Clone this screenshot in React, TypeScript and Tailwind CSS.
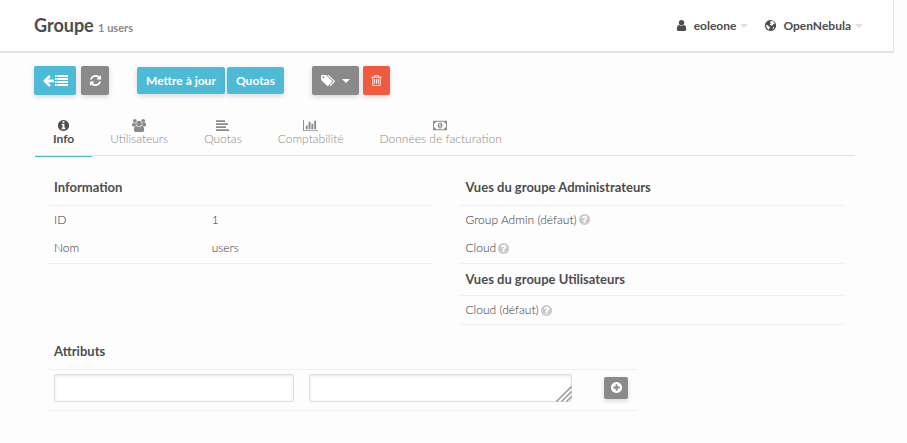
import { useState } from 'react';
import type { ReactNode } from 'react';
import clsx from 'clsx';

const DISC =
  'm0 0M1664 896q0 209-103 385.5t-279.5 279.5-385.5 103-385.5-103-279.5-279.5-103-385.5 103-385.5 279.5-279.5 385.5-103 385.5 103 279.5 279.5 103 385.5z';

const icons = {
  user: 'M1536 1399q0 109-62.5 187t-150.5 78h-854q-88 0-150.5-78t-62.5-187q0-85 8.5-160.5t31.5-152 58.5-131 94-89 134.5-34.5q131 128 313 128t313-128q76 0 134.5 34.5t94 89 58.5 131 31.5 152 8.5 160.5zm-256-887q0 159-112.5 271.5t-271.5 112.5-271.5-112.5-112.5-271.5 112.5-271.5 271.5-112.5 271.5 112.5 112.5 271.5z',
  globe:
    'M896 128q209 0 385.5 103t279.5 279.5 103 385.5-103 385.5-279.5 279.5-385.5 103-385.5-103-279.5-279.5-103-385.5 103-385.5 279.5-279.5 385.5-103zM900 300l160-60 230 110 150 190 50 200-110-60-130 40-60 170-150 30-110-110-130-20 60-140 110-60-110-90zM330 760l170 90 130 160 150 50 60 140-110 110-20 180-190-110-140-200-70-220zM1290 1130l140-60-70 190-130 130-60-100z',
  arrow:
    'M1664 896v128q0 53-32.5 90.5t-84.5 37.5h-704l293 294q38 36 38 90t-38 90l-75 76q-37 37-90 37-52 0-91-37l-651-652q-37-37-37-90 0-52 37-91l651-650q38-38 91-38 52 0 90 38l75 74q38 38 38 91t-38 91l-293 293h704q52 0 84.5 37.5t32.5 90.5z',
  list: 'M0 138h220v276h-220zM320 138h1472v276h-1472zM0 551h220v276h-220zM320 551h1472v276h-1472zM0 965h220v276h-220zM320 965h1472v276h-1472zM0 1378h220v276h-220zM320 1378h1472v276h-1472z',
  refresh:
    'M1639 1056q0 5-1 7-64 268-268 434.5t-478 166.5q-146 0-282.5-55t-243.5-157l-129 129q-19 19-45 19t-45-19-19-45v-448q0-26 19-45t45-19h448q26 0 45 19t19 45-19 45l-137 137q71 66 161 102t187 36q134 0 250-65t186-179q11-17 53-117 8-23 30-23h192q13 0 22.5 9.5t9.5 22.5zm25-800v448q0 26-19 45t-45 19h-448q-26 0-45-19t-19-45 19-45l138-138q-148-137-349-137-134 0-250 65t-186 179q-11 17-53 117-8 23-30 23h-199q-13 0-22.5-9.5t-9.5-22.5v-7q65-268 270-434.5t480-166.5q146 0 284 55.5t245 156.5l130-129q19-19 45-19t45 19 19 45z',
  tags: 'M448 448q0-53-37.5-90.5t-90.5-37.5-90.5 37.5-37.5 90.5 37.5 90.5 90.5 37.5 90.5-37.5 37.5-90.5zm1067 576q0 53-37 90l-491 492q-39 37-91 37-53 0-90-37l-715-716q-38-37-64.5-101t-26.5-117v-416q0-52 38-90t90-38h416q53 0 117 26.5t102 64.5l715 714q37 39 37 91zm384 0q0 53-37 90l-491 492q-39 37-91 37-36 0-59-14t-53-45l470-470q37-37 37-90 0-52-37-91l-715-714q-38-38-102-64.5t-117-26.5h224q53 0 117 26.5t102 64.5l715 714q37 39 37 91z',
  trash:
    'M704 736v576q0 14-9 23t-23 9h-64q-14 0-23-9t-9-23v-576q0-14 9-23t23-9h64q14 0 23 9t9 23zm256 0v576q0 14-9 23t-23 9h-64q-14 0-23-9t-9-23v-576q0-14 9-23t23-9h64q14 0 23 9t9 23zm256 0v576q0 14-9 23t-23 9h-64q-14 0-23-9t-9-23v-576q0-14 9-23t23-9h64q14 0 23 9t9 23zm128 724v-948h-896v948q0 22 7 40.5t14.5 27 10.5 8.5h832q3 0 10.5-8.5t14.5-27 7-40.5zm-672-1076h448l-48-117q-7-9-17-11h-317q-10 2-17 11zm928 32v64q0 14-9 23t-23 9h-96v948q0 83-47 143.5t-113 60.5h-832q-66 0-113-58.5t-47-141.5v-952h-96q-14 0-23-9t-9-23v-64q0-14 9-23t23-9h309l70-167q15-37 54-63t79-26h320q40 0 79 26t54 63l70 167h309q14 0 23 9t9 23z',
  info:
    'M1152 1376v-160q0-14-9-23t-23-9h-96v-512q0-14-9-23t-23-9h-320q-14 0-23 9t-9 23v160q0 14 9 23t23 9h96v320h-96q-14 0-23 9t-9 23v160q0 14 9 23t23 9h448q14 0 23-9t9-23zm-128-896v-160q0-14-9-23t-23-9h-192q-14 0-23 9t-9 23v160q0 14 9 23t23 9h192q14 0 23-9t9-23z' +
    DISC,
  question:
    'M1024 1376v-192q0-14-9-23t-23-9h-192q-14 0-23 9t-9 23v192q0 14 9 23t23 9h192q14 0 23-9t9-23zm256-672q0-88-55.5-163t-138.5-116-170-41q-243 0-371 213-15 24 8 42l132 100q7 6 19 6 16 0 25-12 53-68 86-92 34-24 86-24 48 0 85.5 26t37.5 59q0 38-20 61t-68 45q-63 28-115.5 86.5t-52.5 125.5v36q0 14 9 23t23 9h192q14 0 23-9t9-23q0-19 21.5-49.5t54.5-49.5q32-18 49-28.5t46-35 44.5-48 28-60.5 12.5-81z' +
    DISC,
  plus:
    'M1344 960v-128q0-26-19-45t-45-19h-256v-256q0-26-19-45t-45-19h-128q-26 0-45 19t-19 45v256h-256q-26 0-45 19t-19 45v128q0 26 19 45t45 19h256v256q0 26 19 45t45 19h128q26 0 45-19t19-45v-256h256q26 0 45-19t19-45z' +
    DISC,
  users:
    'M593 896q-162 5-265 128h-134q-82 0-138-40.5t-56-118.5q0-353 124-353 6 0 43.5 21t97.5 42.5 119 21.5q67 0 133-23-5 37-5 66 0 159 93 292zm1071 637q0 120-73 189.5t-194 69.5h-874q-121 0-194-69.5t-73-189.5q0-53 3.5-103.5t14-109 26.5-108.5 43-97.5 62-81 85.5-53.5 111.5-20q10 0 43 21.5t73 48 107 48 135 21.5 135-21.5 107-48 73-48 43-21.5q61 0 111.5 20t85.5 53.5 62 81 43 97.5 26.5 108.5 14 109 3.5 103.5zm-1024-1277q0 106-75 181t-181 75-181-75-75-181 75-181 181-75 181 75 75 181zm704 384q0 159-112.5 271.5t-271.5 112.5-271.5-112.5-112.5-271.5 112.5-271.5 271.5-112.5 271.5 112.5 112.5 271.5zm576 225q0 78-56 118.5t-138 40.5h-134q-103-123-265-128 93-133 93-292 0-29-5-66 66 23 133 23 59 0 119-21.5t97.5-42.5 43.5-21q124 0 124 353zm-128-609q0 106-75 181t-181 75-181-75-75-181 75-181 181-75 181 75 75 181z',
  align: 'M0 165h1240v240h-1240zM0 579h1654v240h-1654zM0 992h1378v240h-1378zM0 1406h1792v240h-1792z',
  chart:
    'M640 896v512h-256v-512h256zm384-512v1024h-256v-1024h256zm1024 1152v128h-2048v-1536h128v1408h1920zm-640-896v768h-256v-768h256zm384-384v1152h-256v-1152h256z',
  money:
    'M768 1152h384v-96h-128v-448h-114l-148 137 77 80q42-37 55-57h2v288h-128v96zm512-256q0 70-21 142t-59.5 134-101.5 101-138 39-138-39-101.5-101-59.5-134-21-142 21-142 59.5-134 101.5-101 138-39 138 39 101.5 101 59.5 134 21 142zm512 256v-512q-106 0-181-75t-75-181h-1152q0 106-75 181t-181 75v512q106 0 181 75t75 181h1152q0-106 75-181t181-75zm128-832v1152q0 26-19 45t-45 19h-1792q-26 0-45-19t-19-45v-1152q0-26 19-45t45-19h1792q26 0 45 19t19 45z',
};

type IconName = keyof typeof icons;

function Icon({ name, wide, className }: { name: IconName; wide?: boolean; className?: string }) {
  return (
    <svg
      viewBox={wide ? '0 0 2048 1792' : '0 0 1792 1792'}
      fill="currentColor"
      fillRule="evenodd"
      aria-hidden="true"
      className={clsx('h-[13px] shrink-0', wide ? 'w-[15px]' : 'w-[13px]', className)}
    >
      <path d={icons[name]} />
    </svg>
  );
}

function Caret({ className }: { className?: string }) {
  return (
    <svg viewBox="0 0 8 4" fill="currentColor" aria-hidden="true" className={clsx('h-1 w-2', className)}>
      <path d="M0 0h8L4 4z" />
    </svg>
  );
}

const tones = {
  blue: 'bg-[#4dbbd6]',
  gray: 'bg-[#8a8a8a]',
  red: 'bg-[#f05a40]',
};

function Button({
  tone,
  label,
  className,
  children,
}: {
  tone: keyof typeof tones;
  label?: string;
  className?: string;
  children: ReactNode;
}) {
  return (
    <button
      type="button"
      aria-label={label}
      className={clsx(
        'flex items-center justify-center rounded-[2px] font-bold text-white shadow-[0_2px_5px_rgba(0,0,0,0.15)]',
        tones[tone],
        className,
      )}
    >
      {children}
    </button>
  );
}

function HeaderMenu({ icon, label }: { icon: IconName; label: string }) {
  return (
    <button type="button" className="flex items-center">
      <Icon name={icon} className="mr-[6px]" />
      {label}
      <Caret className="ml-1 text-[#e0e0e0]" />
    </button>
  );
}

const tabs: { label: string; icon: IconName; wide?: boolean }[] = [
  { label: 'Info', icon: 'info' },
  { label: 'Utilisateurs', icon: 'users', wide: true },
  { label: 'Quotas', icon: 'align' },
  { label: 'Comptabilité', icon: 'chart', wide: true },
  { label: 'Données de facturation', icon: 'money', wide: true },
];

function ViewRow({ name }: { name: string }) {
  return (
    <tr className="h-[29px]">
      <td className="px-[6px]">
        <span className="flex items-center gap-px">
          {name}
          <Icon name="question" className="text-[#cacaca]" />
        </span>
      </td>
    </tr>
  );
}

const heading = 'px-[6px] text-left text-[13px] font-bold';
const line = 'border-[#f0f0f0]';
const field =
  'block h-[28px] rounded-[2px] border border-[#dedede] bg-white px-2 shadow-[inset_0_1px_3px_rgba(0,0,0,0.1)]';

export default function App() {
  const [active, setActive] = useState('Info');

  return (
    <div className="min-h-screen bg-[#fdfdfd] font-['Lato',sans-serif] text-[12px] text-[#4d4d4d]">
      <header className="mr-[13px] flex h-[53px] items-center justify-between border-r border-b-2 border-[#e4e4e4] bg-[#fefefe] pr-[30px] pl-[34px]">
        <h1 className="text-[18px] font-bold">
          Groupe <small className="text-[11px] text-[#8a8a8a]">1 users</small>
        </h1>
        <nav className="flex items-center gap-4 font-bold">
          <HeaderMenu icon="user" label="eoleone" />
          <HeaderMenu icon="globe" label="OpenNebula" />
        </nav>
      </header>

      <main className="mr-[52px] ml-[34px]">
        <div className="flex items-center pt-[13px]">
          <Button tone="blue" label="Retour à la liste" className="h-[29px] w-[42px]">
            <Icon name="arrow" className="w-[12px]" />
            <Icon name="list" />
          </Button>
          <Button tone="gray" label="Rafraîchir" className="ml-[5px] h-[29px] w-[28px]">
            <Icon name="refresh" />
          </Button>
          <Button tone="blue" className="ml-[28px] h-[27px] w-[88px]">
            Mettre à jour
          </Button>
          <Button tone="blue" className="ml-[2px] h-[27px] w-[57px]">
            Quotas
          </Button>
          <Button tone="gray" label="Étiquettes" className="ml-[28px] h-[29px] w-[47px] gap-[6px]">
            <Icon name="tags" wide />
            <Caret />
          </Button>
          <Button tone="red" label="Supprimer" className="ml-1 h-[29px] w-[27px]">
            <Icon name="trash" className="w-[12px]" />
          </Button>
        </div>

        <div role="tablist" className="mt-[18px] ml-px flex h-[43px] border-b border-[#e3e3e3]">
          {tabs.map((tab) => (
            <button
              key={tab.label}
              type="button"
              role="tab"
              aria-selected={active === tab.label}
              onClick={() => setActive(tab.label)}
              className={clsx(
                '-mb-[2px] flex flex-col items-center border-b px-[18px] pt-[6px] leading-[14px]',
                active === tab.label
                  ? 'border-[#4dbbd6] font-bold'
                  : 'border-transparent font-light text-[#8a8a8a]',
              )}
            >
              <Icon name={tab.icon} wide={tab.wide} />
              {tab.label}
            </button>
          ))}
        </div>

        <div className="grid grid-cols-2 gap-[27px] pt-[15px] pr-[11px] pl-[14px] font-light text-[#333]">
          <table className={clsx('w-full table-fixed self-start border-b', line)}>
            <colgroup>
              <col className="w-[41%]" />
              <col />
            </colgroup>
            <thead className="text-[#4d4d4d]">
              <tr className={clsx('h-[34px] border-b', line)}>
                <th colSpan={2} className={heading}>
                  Information
                </th>
              </tr>
            </thead>
            <tbody>
              <tr className="h-[29px]">
                <td className="px-[6px]">ID</td>
                <td className="px-[6px]">1</td>
              </tr>
              <tr className="h-[29px]">
                <td className="px-[6px]">Nom</td>
                <td className="px-[6px]">users</td>
              </tr>
            </tbody>
          </table>

          <div>
            <table className={clsx('w-full border-b', line)}>
              <thead className="text-[#4d4d4d]">
                <tr className={clsx('h-[34px] border-b', line)}>
                  <th className={heading}>Vues du groupe Administrateurs</th>
                </tr>
              </thead>
              <tbody>
                <ViewRow name="Group Admin (défaut)" />
                <ViewRow name="Cloud" />
              </tbody>
            </table>
            <table className={clsx('w-full border-b', line)}>
              <thead className="text-[#4d4d4d]">
                <tr className={clsx('h-[32px] border-b', line)}>
                  <th className={heading}>Vues du groupe Utilisateurs</th>
                </tr>
              </thead>
              <tbody>
                <ViewRow name="Cloud (défaut)" />
              </tbody>
            </table>
          </div>
        </div>

        <table className={clsx('mt-[10px] ml-[14px] w-[589px] table-fixed border-b', line)}>
          <thead>
            <tr className={clsx('h-[34px] border-b', line)}>
              <th className={clsx(heading, 'w-[255px]')}>Attributs</th>
              <th className="w-[292px]" />
              <th />
            </tr>
          </thead>
          <tbody>
            <tr className="h-[41px]">
              <td className="pb-1 pl-[6px]">
                <input type="text" aria-label="Nom de l'attribut" className={clsx(field, 'w-[240px]')} />
              </td>
              <td className="pb-1 pl-[6px]">
                <div className="relative w-[263px]">
                  <textarea
                    aria-label="Valeur de l'attribut"
                    rows={1}
                    className={clsx(field, 'w-full resize-none')}
                  />
                  <svg
                    viewBox="0 0 16 16"
                    fill="none"
                    stroke="#a0a0a0"
                    strokeWidth="1.6"
                    aria-hidden="true"
                    className="pointer-events-none absolute right-0 bottom-0 h-4 w-4"
                  >
                    <path d="M.5 15.5l15-15M5.500 15.500l10-10M10.500 15.500l5-5" />
                  </svg>
                </div>
              </td>
              <td className="pb-1 pl-[9px]">
                <Button tone="gray" label="Ajouter" className="h-[22px] w-[24px]">
                  <Icon name="plus" />
                </Button>
              </td>
            </tr>
          </tbody>
        </table>
      </main>
    </div>
  );
}
